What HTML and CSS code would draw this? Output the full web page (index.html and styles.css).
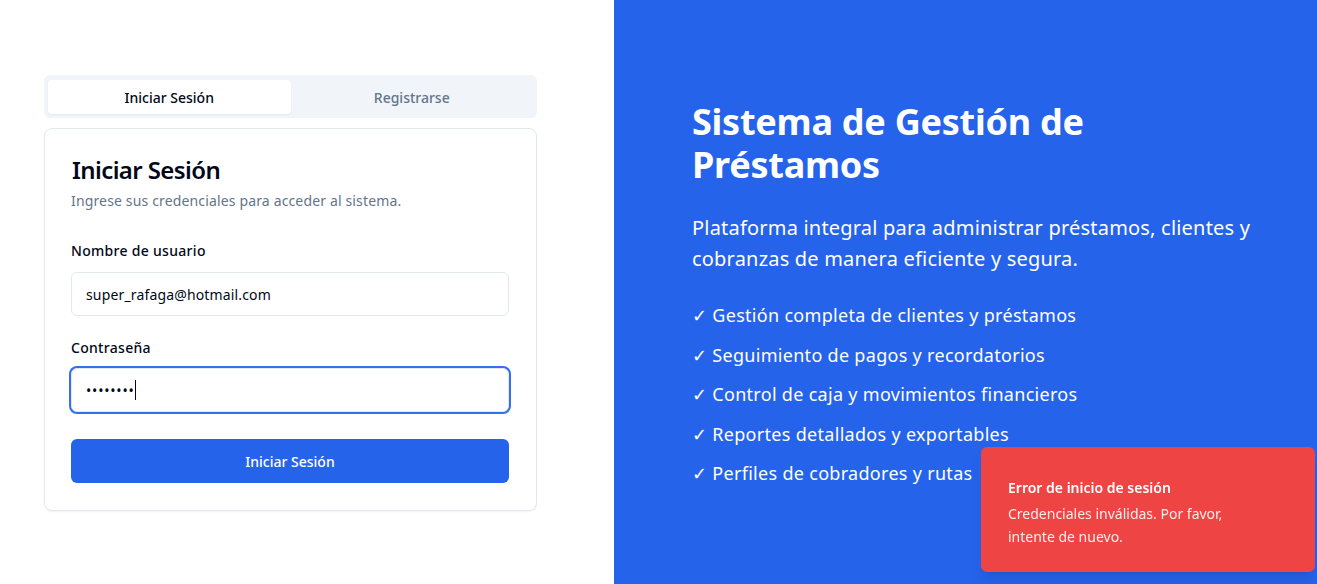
FILE: index.html
```html
<!DOCTYPE html>
<html lang="es">
<head>
<meta charset="utf-8">
<title>Sistema de Gestión de Préstamos</title>
<link rel="stylesheet" href="styles.css">
</head>
<body>
<div class="page">
  <section class="left">
    <div class="auth">
      <div class="tabs">
        <button class="tab active">Iniciar Sesión</button>
        <button class="tab">Registrarse</button>
      </div>
      <div class="card">
        <h2 class="card-title">Iniciar Sesión</h2>
        <p class="card-desc">Ingrese sus credenciales para acceder al sistema.</p>
        <form class="form">
          <div class="field">
            <label class="label" for="user">Nombre de usuario</label>
            <input class="input" id="user" type="text" value="super_rafaga@hotmail.com">
          </div>
          <div class="field field-gap">
            <label class="label" for="pass">Contraseña</label>
            <div class="input-wrap">
              <input class="input input-pass focused" id="pass" type="password" value="12345678">
              <span class="caret"></span>
            </div>
          </div>
          <button type="button" class="btn">Iniciar Sesión</button>
        </form>
      </div>
    </div>
  </section>
  <section class="right">
    <div class="hero">
      <h1 class="hero-title">Sistema de Gestión de Préstamos</h1>
      <p class="hero-text">Plataforma integral para administrar préstamos, clientes y cobranzas de manera eficiente y segura.</p>
      <ul class="features">
        <li>✓ Gestión completa de clientes y préstamos</li>
        <li>✓ Seguimiento de pagos y recordatorios</li>
        <li>✓ Control de caja y movimientos financieros</li>
        <li>✓ Reportes detallados y exportables</li>
        <li>✓ Perfiles de cobradores y rutas</li>
      </ul>
    </div>
  </section>
</div>
<div class="toast" role="alert">
  <div class="toast-title">Error de inicio de sesión</div>
  <div class="toast-desc">Credenciales inválidas. Por favor, intente de nuevo.</div>
</div>
</body>
</html>
```

FILE: styles.css
```css
* { box-sizing: border-box; }
html, body { margin: 0; padding: 0; }
body {
  font-family: "Noto Sans", "Open Sans", "Liberation Sans", sans-serif;
  color: #020817;
  background: #ffffff;
  overflow: hidden;
}
.page {
  display: grid;
  grid-template-columns: 614px 1fr;
  height: 584px;
}
.left {
  display: flex;
  align-items: center;
  padding-left: 44px;
  padding-top: 2px;
  background: #ffffff;
}
.auth { width: 493px; }
.tabs {
  display: grid;
  grid-template-columns: 1fr 1fr;
  background: #f1f5f9;
  border-radius: 6px;
  padding: 5px 4px 4px;
  height: 43px;
}
.tab {
  font-family: inherit;
  font-size: 14px;
  font-weight: 500;
  height: 34px;
  border: 0;
  border-radius: 4px;
  background: transparent;
  color: #64748b;
  cursor: pointer;
}
.tab.active {
  background: #ffffff;
  color: #020817;
  box-shadow: 0 1px 2px rgba(0,0,0,0.05);
}
.card {
  margin-top: 10px;
  border: 1px solid #e2e8f0;
  border-radius: 8px;
  padding: 26px 27px 27px 26px;
  background: #ffffff;
  box-shadow: 0 1px 2px rgba(0,0,0,0.05);
}
.card-title {
  margin: 0;
  font-size: 24px;
  font-weight: 600;
  line-height: 30px;
  letter-spacing: -0.6px;
  padding-left: 1px;
}
.card-desc {
  margin: 6px 0 0;
  font-size: 14px;
  line-height: 20px;
  color: #64748b;
  letter-spacing: 0.15px;
}
.form { margin-top: 30px; display: flex; flex-direction: column; }
.field { display: flex; flex-direction: column; }
.field-gap { margin-top: 22px; }
.label {
  font-size: 14px;
  font-weight: 500;
  line-height: 20px;
  letter-spacing: 0.3px;
  margin-bottom: 11px;
}
.field-gap .label { margin-bottom: 10px; }
.input-wrap { position: relative; }
.input {
  width: 100%;
  height: 44px;
  border: 1px solid #e2e8f0;
  border-radius: 6px;
  padding: 0 14px;
  font-family: inherit;
  font-size: 14px;
  letter-spacing: 0.15px;
  color: #020817;
  background: #ffffff;
  outline: none;
}
.input-pass { letter-spacing: 0.8px; }
.input.focused {
  box-shadow: 0 0 0 2px #3470ee;
}
.caret {
  position: absolute;
  left: 64px;
  top: 12px;
  width: 1px;
  height: 20px;
  background: #020817;
}
.btn {
  margin-top: 27px;
  height: 44px;
  border: 0;
  border-radius: 6px;
  background: #2563eb;
  color: #ffffff;
  font-family: inherit;
  font-size: 14px;
  font-weight: 500;
  cursor: pointer;
}
.right {
  background: #2563eb;
  color: #ffffff;
  display: flex;
  align-items: center;
  padding-left: 78px;
  padding-top: 3px;
}
.hero { max-width: 576px; }
.hero-title {
  margin: 0;
  font-size: 36px;
  font-weight: 700;
  line-height: 43px;
  letter-spacing: -0.25px;
}
.hero-text {
  margin: 26px 0 0;
  font-size: 20px;
  line-height: 31px;
  letter-spacing: 0.2px;
}
.features {
  list-style: none;
  margin: 27px 0 0;
  padding: 0;
  display: flex;
  flex-direction: column;
  gap: 11.5px;
  font-size: 18px;
  line-height: 28px;
  letter-spacing: 0.3px;
}
.toast {
  position: fixed;
  right: 2px;
  bottom: 12px;
  width: 334px;
  background: #ef4444;
  color: #ffffff;
  border: 1px solid #ef4444;
  border-radius: 6px;
  padding: 30px 24px 23px 26px;
  box-shadow: 0 10px 15px -3px rgba(0,0,0,0.1), 0 4px 6px -4px rgba(0,0,0,0.1);
}
.toast-title {
  font-size: 14px;
  font-weight: 600;
  line-height: 20px;
}
.toast-desc {
  margin-top: 4px;
  max-width: 250px;
  font-size: 14px;
  line-height: 23px;
  opacity: 0.9;
}
```
